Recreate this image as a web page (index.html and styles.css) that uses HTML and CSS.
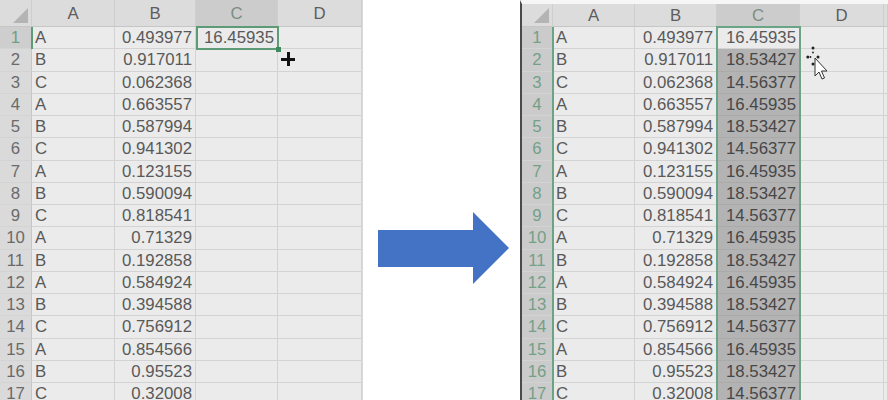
FILE: index.html
```html
<!DOCTYPE html>
<html>
<head>
<meta charset="utf-8">
<link rel="stylesheet" href="styles.css">
</head>
<body>
<div class="page">
  <div class="sheet left">
    <div class="row head">
      <div class="corner"><span class="tri"></span></div>
      <div class="ch">A</div><div class="ch">B</div><div class="ch selh">C</div><div class="ch">D</div>
    </div>
    <div class="row"><div class="rh selr">1</div><div class="c t">A</div><div class="c n">0.493977</div><div class="c n">16.45935</div><div class="c"></div></div>
    <div class="row"><div class="rh">2</div><div class="c t">B</div><div class="c n">0.917011</div><div class="c"></div><div class="c"></div></div>
    <div class="row"><div class="rh">3</div><div class="c t">C</div><div class="c n">0.062368</div><div class="c"></div><div class="c"></div></div>
    <div class="row"><div class="rh">4</div><div class="c t">A</div><div class="c n">0.663557</div><div class="c"></div><div class="c"></div></div>
    <div class="row"><div class="rh">5</div><div class="c t">B</div><div class="c n">0.587994</div><div class="c"></div><div class="c"></div></div>
    <div class="row"><div class="rh">6</div><div class="c t">C</div><div class="c n">0.941302</div><div class="c"></div><div class="c"></div></div>
    <div class="row"><div class="rh">7</div><div class="c t">A</div><div class="c n">0.123155</div><div class="c"></div><div class="c"></div></div>
    <div class="row"><div class="rh">8</div><div class="c t">B</div><div class="c n">0.590094</div><div class="c"></div><div class="c"></div></div>
    <div class="row"><div class="rh">9</div><div class="c t">C</div><div class="c n">0.818541</div><div class="c"></div><div class="c"></div></div>
    <div class="row"><div class="rh">10</div><div class="c t">A</div><div class="c n">0.71329</div><div class="c"></div><div class="c"></div></div>
    <div class="row"><div class="rh">11</div><div class="c t">B</div><div class="c n">0.192858</div><div class="c"></div><div class="c"></div></div>
    <div class="row"><div class="rh">12</div><div class="c t">A</div><div class="c n">0.584924</div><div class="c"></div><div class="c"></div></div>
    <div class="row"><div class="rh">13</div><div class="c t">B</div><div class="c n">0.394588</div><div class="c"></div><div class="c"></div></div>
    <div class="row"><div class="rh">14</div><div class="c t">C</div><div class="c n">0.756912</div><div class="c"></div><div class="c"></div></div>
    <div class="row"><div class="rh">15</div><div class="c t">A</div><div class="c n">0.854566</div><div class="c"></div><div class="c"></div></div>
    <div class="row"><div class="rh">16</div><div class="c t">B</div><div class="c n">0.95523</div><div class="c"></div><div class="c"></div></div>
    <div class="row"><div class="rh">17</div><div class="c t">C</div><div class="c n">0.32008</div><div class="c"></div><div class="c"></div></div>
    <div class="sel-left"><span class="handle"></span></div>
    <div class="plus"></div>
    <div class="rowmark"></div>
  </div>

  <div class="mid">
    <svg class="arrow" width="132" height="74" viewBox="0 0 132 74">
      <polygon points="0,18 95,18 95,0 131,36 95,72 95,55 0,55" fill="#4472c4"/>
    </svg>
  </div>

  <div class="sheet right">
    <div class="row head">
      <div class="corner"><span class="tri"></span></div>
      <div class="ch">A</div><div class="ch">B</div><div class="ch selh">C</div><div class="ch">D</div><div class="ch"></div>
    </div>
    <div class="row"><div class="rh">1</div><div class="c t">A</div><div class="c n">0.493977</div><div class="c n">16.45935</div><div class="c"></div><div class="c"></div></div>
    <div class="row"><div class="rh">2</div><div class="c t">B</div><div class="c n">0.917011</div><div class="c n f">18.53427</div><div class="c"></div><div class="c"></div></div>
    <div class="row"><div class="rh">3</div><div class="c t">C</div><div class="c n">0.062368</div><div class="c n f">14.56377</div><div class="c"></div><div class="c"></div></div>
    <div class="row"><div class="rh">4</div><div class="c t">A</div><div class="c n">0.663557</div><div class="c n f">16.45935</div><div class="c"></div><div class="c"></div></div>
    <div class="row"><div class="rh">5</div><div class="c t">B</div><div class="c n">0.587994</div><div class="c n f">18.53427</div><div class="c"></div><div class="c"></div></div>
    <div class="row"><div class="rh">6</div><div class="c t">C</div><div class="c n">0.941302</div><div class="c n f">14.56377</div><div class="c"></div><div class="c"></div></div>
    <div class="row"><div class="rh">7</div><div class="c t">A</div><div class="c n">0.123155</div><div class="c n f">16.45935</div><div class="c"></div><div class="c"></div></div>
    <div class="row"><div class="rh">8</div><div class="c t">B</div><div class="c n">0.590094</div><div class="c n f">18.53427</div><div class="c"></div><div class="c"></div></div>
    <div class="row"><div class="rh">9</div><div class="c t">C</div><div class="c n">0.818541</div><div class="c n f">14.56377</div><div class="c"></div><div class="c"></div></div>
    <div class="row"><div class="rh">10</div><div class="c t">A</div><div class="c n">0.71329</div><div class="c n f">16.45935</div><div class="c"></div><div class="c"></div></div>
    <div class="row"><div class="rh">11</div><div class="c t">B</div><div class="c n">0.192858</div><div class="c n f">18.53427</div><div class="c"></div><div class="c"></div></div>
    <div class="row"><div class="rh">12</div><div class="c t">A</div><div class="c n">0.584924</div><div class="c n f">16.45935</div><div class="c"></div><div class="c"></div></div>
    <div class="row"><div class="rh">13</div><div class="c t">B</div><div class="c n">0.394588</div><div class="c n f">18.53427</div><div class="c"></div><div class="c"></div></div>
    <div class="row"><div class="rh">14</div><div class="c t">C</div><div class="c n">0.756912</div><div class="c n f">14.56377</div><div class="c"></div><div class="c"></div></div>
    <div class="row"><div class="rh">15</div><div class="c t">A</div><div class="c n">0.854566</div><div class="c n f">16.45935</div><div class="c"></div><div class="c"></div></div>
    <div class="row"><div class="rh">16</div><div class="c t">B</div><div class="c n">0.95523</div><div class="c n f">18.53427</div><div class="c"></div><div class="c"></div></div>
    <div class="row"><div class="rh">17</div><div class="c t">C</div><div class="c n">0.32008</div><div class="c n f">14.56377</div><div class="c"></div><div class="c"></div></div>
    <div class="sel-right"></div>
    <div class="colmark"></div>
    <svg class="cursor" width="26" height="38" viewBox="0 0 26 38">
      <g fill="#222">
        <circle cx="7" cy="2" r="1.5"/><circle cx="7" cy="6.5" r="0.9"/><circle cx="1.8" cy="11" r="1.5"/>
        <circle cx="4.5" cy="11" r="0.9"/><circle cx="12" cy="11" r="1.5"/><circle cx="7" cy="18" r="1.5"/>
      </g>
      <path d="M9 12 L9 30 L13 26 L16 33 L18.5 32 L15.5 25 L21 25 Z" fill="#fff" stroke="#333" stroke-width="1"/>
    </svg>
  </div>
</div>
</body>
</html>
```

FILE: styles.css
```css
html, body {
  margin: 0;
  padding: 0;
  background: #ffffff;
}

.page {
  display: flex;
  width: 888px;
  height: 400px;
  overflow: hidden;
  font-family: "Liberation Sans", Arial, sans-serif;
}

.sheet {
  position: relative;
  background: #ebebeb;
  color: #595959;
  font-size: 16.8px;
}

.left {
  width: 362px;
  border-right: 1px solid #d9d9d9;
}

.right {
  width: 366px;
  margin-left: auto;
  border-left: 2px solid #4a4a4a;
  border-top: 4px solid #f6f6f6;
}

.row {
  display: grid;
  height: 22.25px;
  box-sizing: border-box;
}

.left .row {
  grid-template-columns: 32px 83px 81px 82px 84px;
}

.right .row {
  grid-template-columns: 31px 82px 82px 83px 84px 4px;
}

.left .row.head {
  height: 27px;
}

.right .row.head {
  height: 23px;
}

.row > div {
  box-sizing: border-box;
  border-right: 1px solid #d3d3d3;
  border-bottom: 1px solid #d3d3d3;
  line-height: 21px;
  white-space: nowrap;
  overflow: hidden;
}

.head > div {
  background: #dcdcdc;
  border-bottom: 1px solid #c6c6c6;
  border-right: 1px solid #cecece;
  line-height: 27px;
}

.right .head > div {
  line-height: 23px;
}

.corner {
  position: relative;
}

.tri {
  position: absolute;
  right: 3px;
  bottom: 3px;
  width: 15px;
  height: 15px;
  background: #b4b4b4;
  clip-path: polygon(100% 0, 100% 100%, 0 100%);
}

.ch {
  text-align: center;
  color: #5d5d5d;
}

.ch.selh {
  background: #cccccc;
  color: #7c8c84;
}

.rh {
  background: #dadada;
  text-align: center;
  color: #6a6a6a;
  border-right: 1px solid #c6c6c6 !important;
}

.rh.selr {
  background: #cecece;
  color: #6f9f84;
}

.right .rh {
  background: #cbcbcb;
  color: #74a088;
}

.c.t {
  padding-left: 3px;
}

.c.n {
  text-align: right;
  padding-right: 3px;
}

.c.f {
  background: #b3b3b3;
  color: #474747;
  border-bottom-color: #aaaaaa;
}

.sel-left {
  position: absolute;
  left: 196px;
  top: 26px;
  width: 83px;
  height: 24px;
  box-sizing: border-box;
  border: 2px solid #5d9a76;
}

.handle {
  position: absolute;
  right: -4px;
  bottom: -4px;
  width: 5px;
  height: 5px;
  background: #3f8a5e;
}

.plus {
  position: absolute;
  left: 281px;
  top: 52px;
  width: 14px;
  height: 14px;
  background:
    linear-gradient(#111, #111) center / 14px 3px no-repeat,
    linear-gradient(#111, #111) center / 3px 14px no-repeat;
}

.rowmark {
  position: absolute;
  left: 31px;
  top: 27px;
  width: 2px;
  height: 22px;
  background: #5d9a76;
}

.sel-right {
  position: absolute;
  left: 194px;
  top: 22px;
  width: 85px;
  height: 380px;
  box-sizing: border-box;
  border: 2px solid #6aa486;
}

.colmark {
  position: absolute;
  left: 30px;
  top: 23px;
  width: 2px;
  height: 380px;
  background: #6aa486;
}

.mid {
  display: flex;
  align-items: center;
  padding-left: 15px;
  padding-top: 97px;
}

.arrow {
  display: block;
}

.cursor {
  position: absolute;
  left: 284px;
  top: 42px;
}
```
